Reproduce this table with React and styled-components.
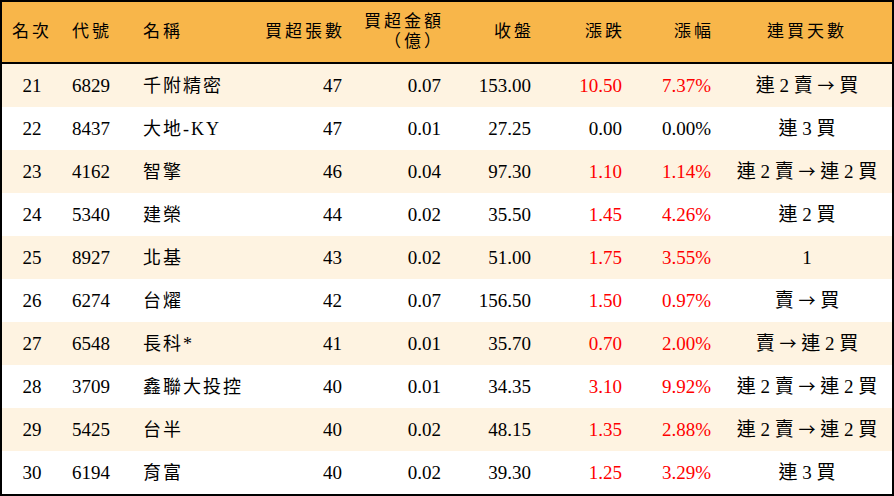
import React from "react";
import styled, { createGlobalStyle } from "styled-components";

const GlobalStyle = createGlobalStyle`
  html, body {
    margin: 0;
    padding: 0;
    background: #fff;
  }
  body {
    font-family: "Liberation Serif", "Noto Sans CJK TC", serif;
    color: #000;
  }
`;

const rows = [
  { rank: 21, code: "6829", name: "千附精密", vol: 47, amt: "0.07", close: "153.00", chg: "10.50", pct: "7.37%", up: true, streak: "連 2 賣 → 買" },
  { rank: 22, code: "8437", name: "大地-KY", vol: 47, amt: "0.01", close: "27.25", chg: "0.00", pct: "0.00%", up: false, streak: "連 3 買" },
  { rank: 23, code: "4162", name: "智擎", vol: 46, amt: "0.04", close: "97.30", chg: "1.10", pct: "1.14%", up: true, streak: "連 2 賣 → 連 2 買" },
  { rank: 24, code: "5340", name: "建榮", vol: 44, amt: "0.02", close: "35.50", chg: "1.45", pct: "4.26%", up: true, streak: "連 2 買" },
  { rank: 25, code: "8927", name: "北基", vol: 43, amt: "0.02", close: "51.00", chg: "1.75", pct: "3.55%", up: true, streak: "1" },
  { rank: 26, code: "6274", name: "台燿", vol: 42, amt: "0.07", close: "156.50", chg: "1.50", pct: "0.97%", up: true, streak: "賣 → 買" },
  { rank: 27, code: "6548", name: "長科*", vol: 41, amt: "0.01", close: "35.70", chg: "0.70", pct: "2.00%", up: true, streak: "賣 → 連 2 買" },
  { rank: 28, code: "3709", name: "鑫聯大投控", vol: 40, amt: "0.01", close: "34.35", chg: "3.10", pct: "9.92%", up: true, streak: "連 2 賣 → 連 2 買" },
  { rank: 29, code: "5425", name: "台半", vol: 40, amt: "0.02", close: "48.15", chg: "1.35", pct: "2.88%", up: true, streak: "連 2 賣 → 連 2 買" },
  { rank: 30, code: "6194", name: "育富", vol: 40, amt: "0.02", close: "39.30", chg: "1.25", pct: "3.29%", up: true, streak: "連 3 買" },
];

const Board = styled.div`
  width: 890px;
  border: 2px solid #000;
`;

const Grid = styled.div`
  display: grid;
  grid-template-columns: 60px 81px 119px 80px 99px 90px 91px 100px 170px;
  align-items: center;
`;

const HeadRow = styled(Grid)`
  height: 60px;
  background: #f8b64a;
  border-bottom: 2px solid #000;
`;

const Row = styled(Grid)`
  height: 43px;
  background: ${(p) => (p.$shaded ? "#fef3e1" : "#ffffff")};
`;

const Cell = styled.div`
  font-size: 19px;
  line-height: 22px;
  white-space: nowrap;
  text-align: ${(p) => p.$align || "right"};
  padding-left: ${(p) => p.$pl || 0}px;
  padding-right: ${(p) => p.$pr || 0}px;
  color: ${(p) => (p.$red ? "#ff0000" : "#000")};
`;

const HeadCell = styled(Cell)`
  font-size: 17px;
  line-height: 20px;
  letter-spacing: 3px;
  margin-right: ${(p) => (p.$align === "right" || !p.$align ? -3 : 0)}px;
`;

const NameCell = styled(Cell)`
  font-size: 18px;
  letter-spacing: 2px;
`;

const Arrow = styled.span`
  font-family: "Noto Sans CJK TC", sans-serif;
  font-size: 17px;
`;

const cols = [
  { align: "center" },
  { align: "left", pl: 10 },
  { align: "left" },
  { align: "right" },
  { align: "right" },
  { align: "right" },
  { align: "right" },
  { align: "right", pr: 11 },
  { align: "center" },
];

const headers = ["名次", "代號", "名稱", "買超張數", null, "收盤", "漲跌", "漲幅", "連買天數"];

function Streak({ text }) {
  const parts = text.split("→");
  return parts.map((p, i) => (
    <React.Fragment key={i}>
      {i > 0 && <Arrow>→</Arrow>}
      {p}
    </React.Fragment>
  ));
}

export default function App() {
  return (
    <>
      <GlobalStyle />
      <Board>
        <HeadRow>
          {headers.map((h, i) => (
            <HeadCell key={i} $align={cols[i].align} $pl={cols[i].pl} $pr={cols[i].pr}>
              {h === null ? (
                <>
                  買超金額
                  <br />
                  （億）
                </>
              ) : (
                h
              )}
            </HeadCell>
          ))}
        </HeadRow>
        {rows.map((r, idx) => (
          <Row key={r.rank} $shaded={idx % 2 === 0}>
            <Cell $align="center">{r.rank}</Cell>
            <Cell $align="left" $pl={10}>{r.code}</Cell>
            <NameCell $align="left">{r.name}</NameCell>
            <Cell>{r.vol}</Cell>
            <Cell>{r.amt}</Cell>
            <Cell>{r.close}</Cell>
            <Cell $red={r.up}>{r.chg}</Cell>
            <Cell $red={r.up} $pr={11}>{r.pct}</Cell>
            <Cell $align="center">
              <Streak text={r.streak} />
            </Cell>
          </Row>
        ))}
      </Board>
    </>
  );
}
